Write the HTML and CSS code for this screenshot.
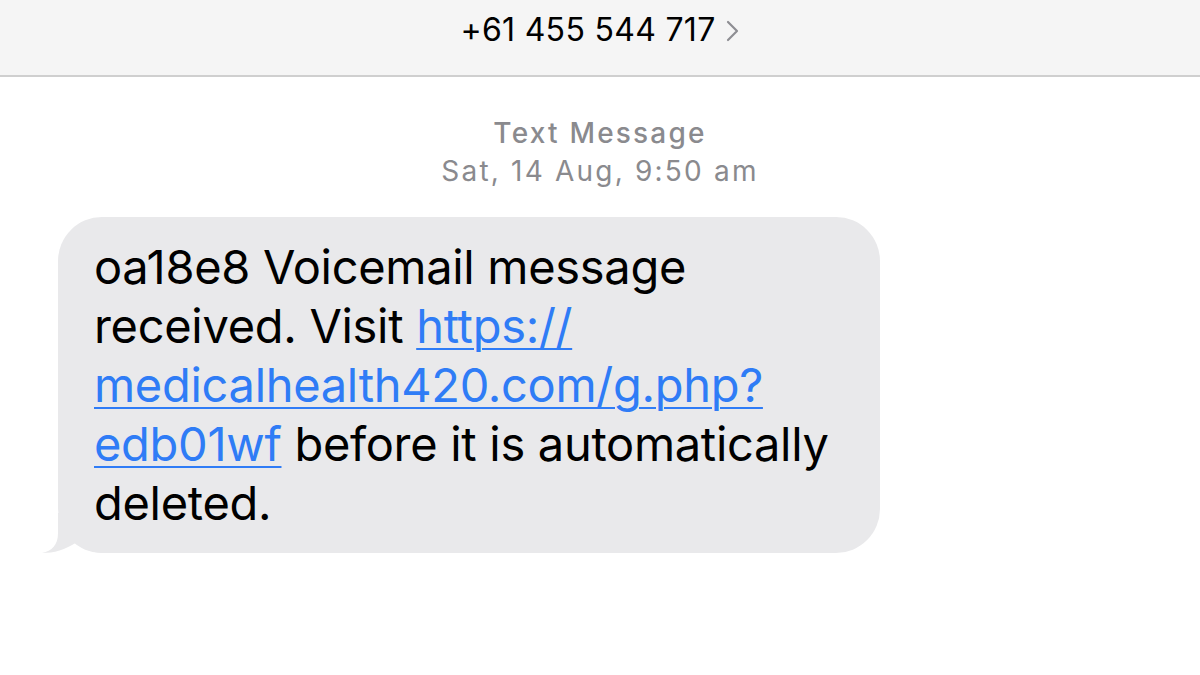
FILE: index.html
```
<!DOCTYPE html>
<html lang="en">
  <head>
    <meta charset="UTF-8" />
    <meta name="viewport" content="width=device-width, initial-scale=1.0" />
    <title>Messages</title>
    <link rel="stylesheet" href="styles.css">
  </head>
  <body>
    <div class="header">
      <span class="contact">+61 455 544 717</span>
      <svg class="chevron" width="14" height="22" viewBox="0 0 14 22">
        <path d="M2 2 L11 11 L2 20" fill="none" stroke="#8e8e93" stroke-width="2.2" stroke-linecap="round" stroke-linejoin="round"/>
      </svg>
    </div>
    <div class="meta">
      <div class="kind">Text Message</div>
      <div class="time">Sat, 14 Aug, 9:50 am</div>
    </div>
    <div class="thread">
      <div class="bubble">
        <svg class="tail" width="64" height="40" viewBox="0 0 64 40">
          <path d="M18 0 L18 20 C18 32 12 38 2 40 C14 40 25 37 37 29 C44 36 52 40 64 40 L64 0 Z" fill="#e9e9eb"/>
        </svg>
        oa18e8 Voicemail message<br>
        received. Visit <a href="#">https://<br>medicalhealth420.com/g.php?<br>edb01wf</a> before it is automatically<br>
        deleted.
      </div>
    </div>
  </body>
</html>
```
FILE: styles.css
```
body {
    margin: 0;
    background: #fff;
    font-family: Inter, "Liberation Sans", sans-serif;
    color: #000;
}
.header {
    height: 77px;
    background: #f5f5f5;
    border-bottom: 2px solid #cfcfcf;
    display: flex;
    justify-content: center;
    align-items: center;
    gap: 10px;
    padding-bottom: 16px;
    box-sizing: border-box;
}
.contact {
    font-size: 32px;
    letter-spacing: 0.3px;
}
.chevron {
    margin-top: 2px;
}
.meta {
    text-align: center;
    color: #8a8a8e;
    font-size: 28px;
    letter-spacing: 2.2px;
    line-height: 38px;
    margin-top: 37px;
}
.kind {
    font-weight: 500;
}
.thread {
    padding: 27px 0 0 58px;
}
.bubble {
    position: relative;
    width: 786px;
    background: #e9e9eb;
    border-radius: 44px;
    padding: 20px 0 21px 36px;
    font-size: 47px;
    line-height: 59px;
    letter-spacing: -0.3px;
}
.bubble a {
    color: #2f7cf6;
    text-decoration: underline;
    text-decoration-thickness: 2px;
    text-underline-offset: 5px;
}
.tail {
    position: absolute;
    left: -18px;
    bottom: 0;
    z-index: -1;
}
```
